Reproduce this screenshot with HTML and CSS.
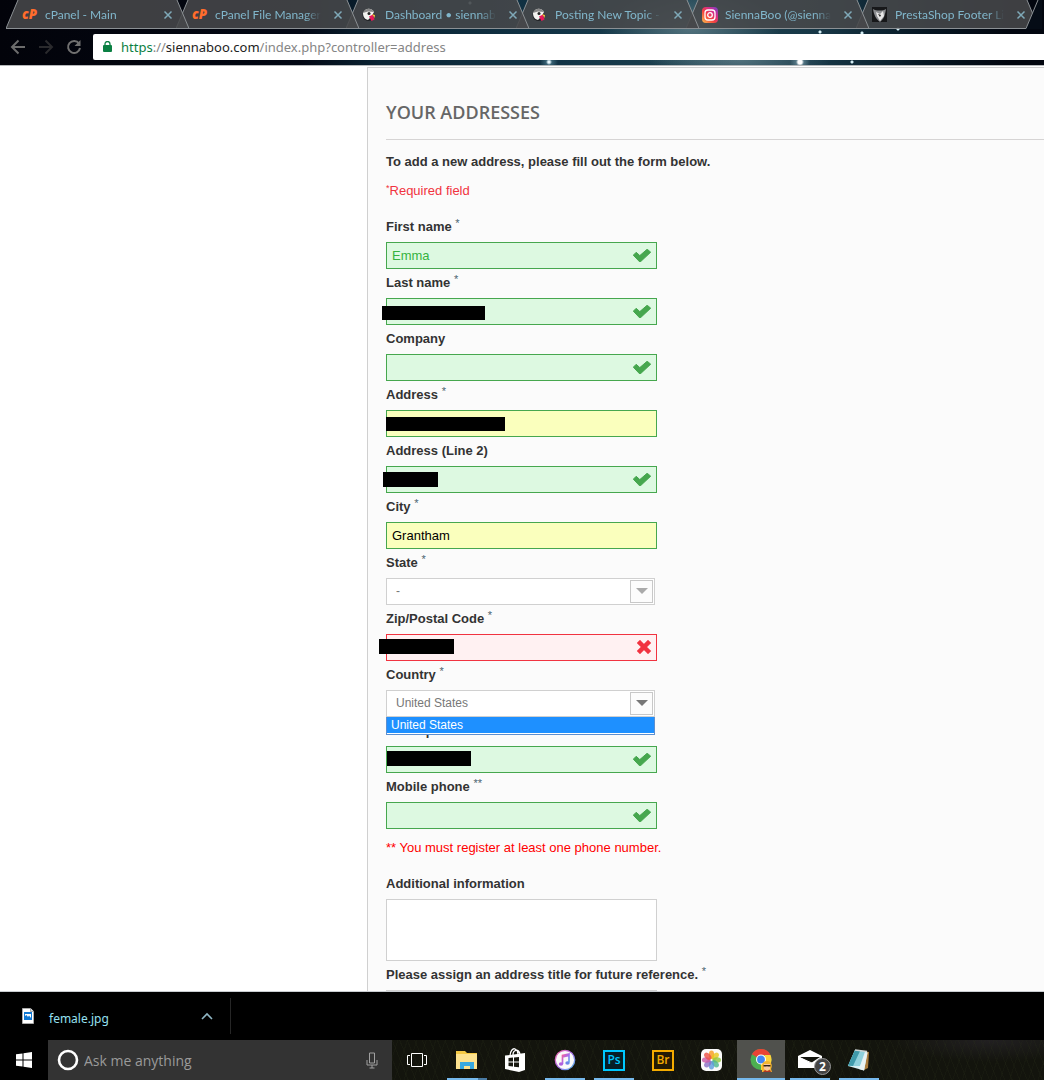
FILE: index.html
```html
<!DOCTYPE html>
<html lang="en">
<head>
<meta charset="utf-8">
<meta name="viewport" content="width=device-width, initial-scale=1">
<title>Your addresses</title>
<link rel="stylesheet" href="styles.css">
</head>
<body>
<svg class="sprite" aria-hidden="true">
  <symbol id="tab-shape" viewBox="0 0 183 29"><path d="M0 28.500 12 0H171L183 28.500Z" fill="#47484a" fill-opacity=".88"/><path d="M0 28.500 12 0M171 0 183 28.500M0 28.500H183" fill="none" stroke="#8b9094" stroke-width="1"/></symbol>
  <symbol id="close" viewBox="0 0 10 10"><path d="M1.500 1.500l7 7M8.500 1.500l-7 7" fill="none" stroke="#7fa9b8" stroke-width="1.500"/></symbol>
  <symbol id="cpanel" viewBox="0 0 17 16"><text x="0" y="12" font-family="Open Sans, sans-serif" font-size="14" font-weight="800" font-style="italic" fill="#ff6c2c">cP</text></symbol>
  <symbol id="puffin" viewBox="0 0 16 16"><circle cx="6.500" cy="8" r="6" fill="#202124"/><path d="M1 6C3 1 9 0 12 5l-2 4-4 4C2 12 1 9 1 6Z" fill="#f3f3f0"/><path d="M1 6C3 1 9 0 12 5L6 4.500Z" fill="#888"/><circle cx="7" cy="6.500" r="1.500" fill="#222"/><path d="M7 9.500l4-2 1.500 5-3 1.500Z" fill="#e7195a"/><path d="M10 7l3 1-.500 3Z" fill="#f4c542"/></symbol>
  <symbol id="check" viewBox="0 0 18 13"><path d="M.300 6.200 3.200 3.300 6.800 6.600 14.200 .200 17.700 3.200 7 13.200Z" fill="#46a74e" stroke="#46a74e" stroke-width="1" stroke-linejoin="round"/></symbol>
  <symbol id="cross" viewBox="0 0 14 14"><path d="M3 3l8 8M11 3l-8 8" fill="none" stroke="#f13340" stroke-width="4.500" stroke-linecap="square"/></symbol>
</svg>

<header class="browser">
  <nav class="tabs" aria-label="Tabs">
    <div class="tab"><svg class="tab-bg"><use href="#tab-shape"/></svg><svg class="favicon"><use href="#cpanel"/></svg><a href="#" class="tab-title">cPanel - Main</a><button class="tab-close" aria-label="Close"><svg><use href="#close"/></svg></button></div>
    <div class="tab"><svg class="tab-bg"><use href="#tab-shape"/></svg><svg class="favicon"><use href="#cpanel"/></svg><a href="#" class="tab-title">cPanel File Manager</a><button class="tab-close" aria-label="Close"><svg><use href="#close"/></svg></button></div>
    <div class="tab"><svg class="tab-bg"><use href="#tab-shape"/></svg><svg class="favicon"><use href="#puffin"/></svg><a href="#" class="tab-title">Dashboard • siennab</a><button class="tab-close" aria-label="Close"><svg><use href="#close"/></svg></button></div>
    <div class="tab"><svg class="tab-bg"><use href="#tab-shape"/></svg><svg class="favicon"><use href="#puffin"/></svg><a href="#" class="tab-title">Posting New Topic -</a><button class="tab-close" aria-label="Close"><svg><use href="#close"/></svg></button></div>
    <div class="tab"><svg class="tab-bg"><use href="#tab-shape"/></svg><svg class="favicon" viewBox="0 0 16 16"><defs><linearGradient id="insta" x1="0" y1="1" x2="1" y2="0"><stop offset="0" stop-color="#fdc04c"/><stop offset=".4" stop-color="#f4443e"/><stop offset=".7" stop-color="#d22c8e"/><stop offset="1" stop-color="#6a45d0"/></linearGradient></defs><rect width="16" height="16" rx="4" fill="url(#insta)"/><rect x="3" y="3" width="10" height="10" rx="3" fill="none" stroke="#fff" stroke-width="1.300"/><circle cx="8" cy="8" r="2.300" fill="none" stroke="#fff" stroke-width="1.300"/></svg><a href="#" class="tab-title">SiennaBoo (@sienna</a><button class="tab-close" aria-label="Close"><svg><use href="#close"/></svg></button></div>
    <div class="tab"><svg class="tab-bg"><use href="#tab-shape"/></svg><svg class="favicon" viewBox="0 0 16 16"><rect width="15" height="15" fill="#17181a"/><path d="M1 2c3 2 10 2 13 0-1 6-2 10-6 13C4 12 2 8 1 2Z" fill="#8b8d90"/><path d="M4 5l4 2 3-3 1 5-4 5-3-5Z" fill="#e8e8e8"/><path d="M6 7l3 1-1 2Z" fill="#222"/></svg><a href="#" class="tab-title">PrestaShop Footer Li</a><button class="tab-close" aria-label="Close"><svg><use href="#close"/></svg></button></div>
    <svg class="tab-current" viewBox="0 0 16 29" aria-hidden="true"><path d="M0 28.500 12 0H16V29H0Z" fill="#050c16"/><path d="M0 28.500 12 0" fill="none" stroke="#8b9094"/></svg>
  </nav>
  <div class="toolbar">
    <button class="tool" aria-label="Back"><svg viewBox="0 0 16 16"><path d="M15 8H2M8.500 1.500 2 8l6.500 6.500" stroke="#6c6c6c"/></svg></button>
    <button class="tool" aria-label="Forward"><svg viewBox="0 0 16 16"><path d="M1 8h13M7.500 1.500 14 8l-6.500 6.500" stroke="#2a2a2d"/></svg></button>
    <button class="tool" aria-label="Reload"><svg viewBox="0 0 16 16"><path d="M13 4.500A6 6 0 1 0 14 9" stroke="#707070"/><path d="M14.500 1v6h-6Z" fill="#707070"/></svg></button>
    <div class="omnibox">
      <svg class="lock" viewBox="0 0 9 12"><rect y="4" width="9" height="7" rx="1" fill="#0b8043"/><path d="M2 5V3a2.500 2.500 0 0 1 5 0v2" fill="none" stroke="#0b8043" stroke-width="1.300"/></svg>
      <div class="url" role="textbox" contenteditable="true" aria-label="Address bar" spellcheck="false"><span class="scheme">https</span>://<span class="host">siennaboo.com</span>/index.php?controller=address</div>
    </div>
  </div>
</header>

<main class="page">
  <form class="card">
    <h1 class="title">YOUR ADDRESSES</h1>
    <p class="intro">To add a new address, please fill out the form below.</p>
    <p class="required"><sup>*</sup>Required field</p>

    <div class="row"><label for="first">First name <sup>*</sup></label>
      <div class="field"><input id="first" class="ok" value="Emma"><svg class="mark"><use href="#check"/></svg></div></div>
    <div class="row"><label for="last">Last name <sup>*</sup></label>
      <div class="field"><input id="last" class="ok"><svg class="mark"><use href="#check"/></svg><span class="redacted r-last"></span></div></div>
    <div class="row"><label for="company">Company</label>
      <div class="field"><input id="company" class="ok"><svg class="mark"><use href="#check"/></svg></div></div>
    <div class="row"><label for="address">Address <sup>*</sup></label>
      <div class="field"><input id="address" class="filled"><span class="redacted r-address"></span></div></div>
    <div class="row"><label for="address2">Address (Line 2)</label>
      <div class="field"><input id="address2" class="ok"><svg class="mark"><use href="#check"/></svg><span class="redacted r-address2"></span></div></div>
    <div class="row"><label for="city">City <sup>*</sup></label>
      <div class="field"><input id="city" class="filled" value="Grantham"></div></div>
    <div class="row"><label for="state">State <sup>*</sup></label>
      <div class="field pick"><select id="state"><option>-</option></select><span class="arrow muted"></span></div></div>
    <div class="row"><label for="zip">Zip/Postal Code <sup>*</sup></label>
      <div class="field"><input id="zip" class="error"><svg class="mark mark-cross"><use href="#cross"/></svg><span class="redacted r-zip"></span></div></div>
    <div class="row"><label for="country">Country <sup>*</sup></label>
      <div class="field pick"><select id="country"><option>United States</option></select><span class="arrow"></span>
        <ul class="options" role="listbox" aria-label="Country"><li role="option" aria-selected="true">United States</li></ul></div></div>
    <div class="row"><label for="home">Home phone <sup>**</sup></label>
      <div class="field"><input id="home" class="ok"><svg class="mark"><use href="#check"/></svg><span class="redacted r-home"></span></div></div>
    <div class="row"><label for="mobile">Mobile phone <sup>**</sup></label>
      <div class="field"><input id="mobile" class="ok"><svg class="mark"><use href="#check"/></svg></div></div>
    <p class="note">** You must register at least one phone number.</p>
    <div class="row"><label for="info">Additional information</label>
      <div class="field"><textarea id="info"></textarea></div></div>
    <div class="row"><label for="alias">Please assign an address title for future reference. <sup>*</sup></label>
      <div class="field"><input id="alias"></div></div>
  </form>
</main>

<section class="downloads" aria-label="Downloads">
  <div class="download">
    <svg class="file" viewBox="0 0 12 16"><path d="M.500.500h8l3 3v12H.500Z" fill="#fff" stroke="#aaa"/><path d="M8.500 0v3.500H12" fill="#ddd" stroke="#888" stroke-width=".700"/><rect x="2" y="4" width="8" height="8" fill="#0f78d4"/><path d="M3 6h6v4L7 7.500 6 9 4.500 7 3 8Z" fill="#fff"/></svg>
    <a href="#">female.jpg</a>
    <button aria-label="Download options"><svg viewBox="0 0 12 8"><path d="M1 7l5-5 5 5" fill="none" stroke="#8fb6c4" stroke-width="1.600"/></svg></button>
  </div>
</section>

<footer class="taskbar">
  <button class="start" aria-label="Start"><svg viewBox="0 0 16 16" width="16" height="16"><path d="M0 2.300 6.500 1.400V7.500H0ZM7.500 1.200 16 0V7.500H7.500ZM0 8.500H6.500V14.600L0 13.700ZM7.500 8.500H16V16L7.500 14.800Z" fill="#fff"/></svg></button>
  <div class="search">
    <svg viewBox="0 0 22 22" width="22" height="22"><circle cx="11" cy="11" r="9" fill="none" stroke="#fff" stroke-width="2.600"/></svg>
    <input aria-label="Search" placeholder="Ask me anything">
    <svg viewBox="0 0 12 17" width="12" height="17"><path d="M3.500 1h5v10h-5ZM1 8v5h10V8M6 13v3M3.500 16h5" fill="none" stroke="#a0a0a0"/></svg>
  </div>
  <button class="taskview" aria-label="Task view"><svg viewBox="0 0 20 16" width="20" height="16"><path d="M4.500 1.500h11v13h-11ZM3 3.500H.500v9H3M17 3.500h2.500v9H17" fill="none" stroke="#fff"/></svg></button>
  <div class="apps">
    <button class="app running grouped" aria-label="File Explorer"><svg viewBox="0 0 24 24"><path d="M1 3h9l2 2h10v16H1Z" fill="#f5c945"/><path d="M1 6h21v15H1Z" fill="#fde28f"/><path d="M5 21v-7h14v7h-4v-3H9v3Z" fill="#38a9e0"/></svg></button>
    <button class="app" aria-label="Store"><svg viewBox="0 0 24 24"><path d="M1 7.500 21 5v17L15 24 1 21Z" fill="#fff"/><path d="M6 8C6 3 9 0 11 1s3 3 3 5M9 7c0-5 5-7 7-1" fill="none" stroke="#fff" stroke-width="1.300"/><path d="M4.500 10 9 9.600V13.500H4.500ZM10 9.500 15 9V13.500H10ZM4.500 14.500H9V18.500L4.500 18ZM10 14.500H15V19.200L10 18.700Z" fill="#171810"/></svg></button>
    <button class="app running" aria-label="iTunes"><svg viewBox="0 0 24 24"><defs><linearGradient id="tune" x1="0" y1="0" x2="1" y2="1"><stop offset="0" stop-color="#f4639b"/><stop offset=".5" stop-color="#a96bec"/><stop offset="1" stop-color="#4fc0ec"/></linearGradient></defs><circle cx="12" cy="12" r="9.700" fill="#fafafa" stroke="url(#tune)" stroke-width="1.300"/><path d="M9.500 16V7.500L16 6v8.500M9.500 9 16 7.500" fill="none" stroke="url(#tune)" stroke-width="1.700"/><ellipse cx="8" cy="16" rx="2.200" ry="1.800" fill="#b15fdf"/><ellipse cx="14.500" cy="15" rx="2.200" ry="1.800" fill="#6c86ea"/></svg></button>
    <button class="app running" aria-label="Photoshop"><span class="adobe ps">Ps</span></button>
    <button class="app" aria-label="Bridge"><span class="adobe br">Br</span></button>
    <button class="app" aria-label="Photos"><svg viewBox="0 0 24 24"><rect x="1" y="1" width="21" height="22" rx="5" fill="#fafafa"/><g transform="translate(11.500 12)" fill-opacity=".8"><ellipse cy="-5.300" rx="2.700" ry="4.300" fill="#f79a1e"/><ellipse cy="-5.300" rx="2.700" ry="4.300" fill="#e8c51c" transform="rotate(45)"/><ellipse cy="-5.300" rx="2.700" ry="4.300" fill="#92c83e" transform="rotate(90)"/><ellipse cy="-5.300" rx="2.700" ry="4.300" fill="#4bb78c" transform="rotate(135)"/><ellipse cy="-5.300" rx="2.700" ry="4.300" fill="#5b9bdc" transform="rotate(180)"/><ellipse cy="-5.300" rx="2.700" ry="4.300" fill="#8a6fc4" transform="rotate(225)"/><ellipse cy="-5.300" rx="2.700" ry="4.300" fill="#c95aa6" transform="rotate(270)"/><ellipse cy="-5.300" rx="2.700" ry="4.300" fill="#ec4f45" transform="rotate(315)"/></g></svg></button>
    <button class="app running active" aria-label="Chrome"><svg viewBox="0 0 24 24"><circle cx="12" cy="11.500" r="10.500" fill="#4caf50"/><path d="M12 11.500 2.900 6.200A10.500 10.500 0 0 1 21.500 7H12Z" fill="#ea4335"/><path d="M12 11.500 16 7h5.500A10.500 10.500 0 0 1 12 22Z" fill="#fdd23c"/><circle cx="12" cy="11.500" r="5" fill="#fff"/><circle cx="12" cy="11.500" r="3.900" fill="#4285f4"/><path d="M13 20c-1-4 1-7 5-7s6 4 4 8l1 3H13Z" fill="#f3b531"/><path d="M15 16h6v5l-3 2-3-2Z" fill="#f6c9a0"/><path d="M14.500 17h7v1.500h-3l-.500-.500-.500.500h-3Z" fill="#302018"/><path d="M14 24l2-2 2 1 3-1 1 2Z" fill="#b23524"/></svg></button>
    <button class="app running mail" aria-label="Mail"><svg viewBox="0 0 24 24"><path d="M0 8 12 2l12 6v12H0Z" fill="#fff"/><path d="M2 9h20l-9 6Z" fill="#14150e"/><path d="M0 9l14 6" stroke="#fff"/></svg><span class="badge">2</span></button>
    <button class="app running" aria-label="Notepad"><svg viewBox="0 0 24 24"><path d="M9 2 22 4 21 20 17 22Z" fill="#a97b3b"/><path d="M8 2 20.500 4 17 22.500 1 18Z" fill="#d6eef2"/><path d="M8 2 18 3.500 13 18 1 18Z" fill="#8fd0dc"/><path d="M8 2 13 3 6 18 1 17.500Z" fill="#3f9aab"/><path d="M18.500 4 20.500 5 17 22.500 12 21Z" fill="#e9f3f4"/><path d="M8 2l12 1.500" stroke="#cfd6d6" stroke-width="1.500"/></svg></button>
  </div>
</footer>
</body>
</html>
```
FILE: styles.css
```css
* { box-sizing: border-box; }

body {
  margin: 0;
  height: 100vh;
  display: flex;
  flex-direction: column;
  overflow: hidden;
  background: #000;
  font-family: "Liberation Sans", Arial, sans-serif;
  font-size: 13px;
}

button {
  border: 0;
  padding: 0;
  background: none;
  font: inherit;
  display: flex;
  align-items: center;
  justify-content: center;
}

a { text-decoration: none; }
p, h1, ul { margin: 0; padding: 0; }
.sprite { display: none; }

/* Browser window */
.browser {
  flex: none;
  border-bottom: 1px solid #b5b8ba;
  background:
    radial-gradient(circle at 549px 62px, #e8f8ff 0 1px, #6fa5b766 3px, transparent 9px),
    radial-gradient(circle at 800px 62px, #fff 0 2px, #8fb5c366 4px, transparent 10px),
    radial-gradient(circle at 820px 32px, #d4eef5 0 1px, transparent 2px),
    radial-gradient(circle at 862px 33px, #d4eef5 0 1px, transparent 2px),
    radial-gradient(circle at 898px 29px, #d4eef5 0 1px, transparent 2px),
    radial-gradient(circle at 852px 62px, #d4eef5 0 1px, transparent 2px),
    radial-gradient(circle at 470px 3px, #9cc3cf 0 1px, transparent 2px),
    radial-gradient(ellipse 90px 40px at 690px 28px, #6c8a94aa, transparent),
    radial-gradient(ellipse 90px 24px at 740px 60px, #6c8a94aa, transparent),
    linear-gradient(90deg, #02030a 0, #030814 300px, #0a2434 380px, #123446 560px, #1e4250 700px, #173746 820px, #061622 930px, #02060f 1010px);
}

.tabs { display: flex; height: 29px; padding-left: 6px; overflow: hidden; }

.tab {
  position: relative;
  flex: none;
  display: flex;
  align-items: center;
  width: 183px;
  height: 29px;
  margin-right: -13px;
  padding: 0 16px;
}
.tab:nth-child(1) { z-index: 6; }
.tab:nth-child(2) { z-index: 5; }
.tab:nth-child(3) { z-index: 4; }
.tab:nth-child(4) { z-index: 3; }
.tab:nth-child(5) { z-index: 2; }
.tab:nth-child(6) { z-index: 1; }

.tab-bg { position: absolute; inset: 0; width: 183px; height: 29px; z-index: -1; }
.tab-current { position: relative; z-index: 7; flex: none; width: 16px; height: 29px; }
.favicon { flex: none; width: 16px; height: 16px; margin-right: 7px; overflow: visible; }

.tab-title {
  flex: 1;
  white-space: nowrap;
  font: 12px/18px "Lato", sans-serif;
  color: #80b6cb;
  -webkit-mask-image: linear-gradient(90deg, #000 85%, transparent);
  mask-image: linear-gradient(90deg, #000 85%, transparent);
}
.tab-close { flex: none; width: 10px; margin-left: 12px; }
.tab-close svg { width: 10px; height: 10px; }

.toolbar { display: flex; align-items: center; gap: 12px; padding: 5px 0 5px 10px; }
.tool { flex: none; width: 16px; height: 16px; }
.tool svg { width: 16px; height: 16px; fill: none; stroke-width: 2; }

.omnibox {
  flex: 1;
  display: flex;
  align-items: center;
  gap: 9px;
  height: 26px;
  margin-left: -1px;
  padding-left: 10px;
  border-radius: 2px 0 0 2px;
  background: #fff;
}
.lock { width: 9px; height: 12px; }
.url { font: 13px/20px "Noto Sans", sans-serif; color: #858585; white-space: nowrap; }
.scheme { color: #0b8043; }
.host { color: #222; }

/* Page */
.page { flex: 1; min-height: 0; overflow: hidden; padding: 1px 0 0 367px; background: #fff; border-bottom: 1px solid #c9cdd1; }

.card {
  padding: 33px 0 20px 18px;
  border: solid #d0d0d0;
  border-width: 1px 0 0 1px;
  background: #fbfbfb;
  color: #333;
}
.title {
  padding-bottom: 16px;
  border-bottom: 1px solid #d6d4d4;
  font: 600 18px/22px "Open Sans", sans-serif;
  color: #666;
}
.intro { margin-top: 13px; font-weight: bold; line-height: 18px; }
.required { margin: 11px 0 14px; line-height: 18px; color: #f13340; }

sup { font-size: 11px; line-height: 0; vertical-align: 4px; font-weight: normal; }
.required sup { font-size: 9px; }
label sup { color: #4c6470; }

.row { padding-top: 4px; }
.row label { display: block; margin-bottom: 6px; font-weight: bold; line-height: 18px; }
.row + .row { padding-top: 5px; }
.field { position: relative; width: 271px; }
.field.pick { width: 269px; }

.field input, .field select, .field textarea {
  display: block;
  width: 100%;
  height: 27px;
  margin: 0;
  padding: 0 5px;
  border: 1px solid #d0d0d0;
  border-radius: 0;
  background: #fff;
  font: 13px "Liberation Sans", Arial, sans-serif;
  color: #000;
  outline: 0;
}
.field textarea { height: 62px; resize: none; }
.field select { appearance: none; padding: 0 9px 2px; font-size: 12px; color: #777; }
.field .ok { border-color: #46a74e; background: #ddf9e1; color: #35b33f; }
.field .filled { border-color: #46a74e; background: #faffbd; }
.field .error { border-color: #f13340; background: #fff1f2; }

.mark { position: absolute; right: 6px; top: 7px; width: 18px; height: 13px; overflow: visible; }
.mark-cross { top: 6px; width: 14px; height: 14px; }

.redacted { position: absolute; top: 6px; height: 15px; background: #000; }
.r-last { left: -4px; top: 8px; width: 103px; height: 14px; }
.r-address { left: 0; top: 7px; width: 119px; height: 14px; }
.r-address2 { left: -3px; width: 55px; }
.r-zip { left: -7px; top: 5px; width: 75px; }
.r-home { left: 1px; top: 5px; width: 84px; }

.arrow {
  position: absolute;
  top: 2px;
  right: 2px;
  width: 23px;
  height: 23px;
  border: 1px solid #c8c8c8;
  background: #fcfcfc;
  color: #777;
  pointer-events: none;
}
.arrow::after { content: ""; position: absolute; left: 5px; top: 7px; border: solid transparent; border-width: 6px 6px 0; border-top-color: currentColor; }
.arrow.muted { color: #aaa; }

.options {
  position: absolute;
  z-index: 2;
  top: 27px;
  left: 0;
  right: 0;
  border: solid #5c8fd0;
  border-width: 0 1px 1px;
  background: #fff;
  list-style: none;
  padding-bottom: 1px;
}
.options li { padding-left: 4px; background: #1e90ff; color: #fff; font-size: 12px; line-height: 16px; }

.note { margin: 10px 0 14px; line-height: 18px; color: #f00; }

/* Download shelf */
.downloads { flex: none; display: flex; align-items: center; height: 48px; background: #000; }
.download { display: flex; align-items: center; width: 231px; height: 36px; padding: 0 17px 0 22px; border-right: 1px solid #262626; }
.download .file { width: 12px; height: 16px; margin-right: 15px; }
.download a { flex: 1; padding-top: 5px; font: 12px/18px "Noto Sans", sans-serif; color: #96e0f2; }
.download button svg { width: 12px; height: 8px; }

/* Taskbar */
.taskbar {
  flex: none;
  display: flex;
  height: 40px;
  background:
    linear-gradient(90deg, #000 0 48px, transparent 48px),
    repeating-linear-gradient(68deg, #2a301a33 0 1px, transparent 1px 7px),
    repeating-linear-gradient(108deg, #262c1833 0 1px, transparent 1px 9px),
    radial-gradient(ellipse 100px 22px at 990px 0, #222022, transparent),
    #13140d;
}
.start { width: 48px; }
.search { display: flex; align-items: center; gap: 5px; width: 344px; padding: 0 14px 0 9px; background: #333; }
.search input { flex: 1; min-width: 0; padding: 2px 0 0; border: 0; background: none; outline: 0; font: 14px/20px "Open Sans", sans-serif; color: #ddd; }
.search input::placeholder { color: #9a9a9a; opacity: 1; }
.taskview { width: 50px; }
.apps { display: flex; gap: 1px; padding-left: 1px; }
.app { position: relative; width: 48px; }
.app svg { width: 24px; height: 24px; }
.app.active { background: #50514d; }
.running::after { content: ""; position: absolute; left: 4px; right: 4px; bottom: 0; height: 2px; background: #76b9ed; }
.running.active::after { left: 0; right: 0; }
.running.grouped::after { background: linear-gradient(90deg, #76b9ed 31px, #4a7ba3 31px); }
.adobe { width: 22px; height: 21px; border: 2px solid; font: 600 12px/16px "Open Sans", sans-serif; }
.ps { background: #061e26; color: #00c8ff; }
.br { background: #241a04; color: #f4ab00; }
.badge {
  position: absolute;
  left: 28px;
  top: 18px;
  width: 17px;
  height: 17px;
  border: 1px solid #999;
  border-radius: 50%;
  background: #444;
  color: #fff;
  font: bold 12px/15px "Open Sans", sans-serif;
  text-align: center;
}
```
